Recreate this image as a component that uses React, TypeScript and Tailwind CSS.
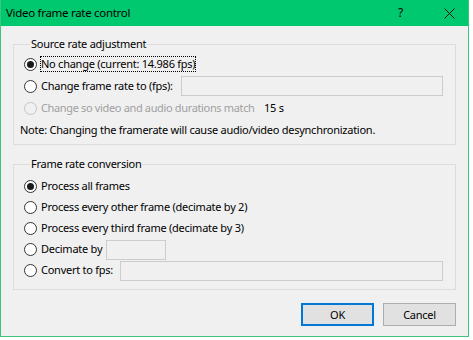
import React from 'react';

const font = { fontFamily: '"Noto Sans", "Liberation Sans", sans-serif' };

const Radio: React.FC<{ checked?: boolean; disabled?: boolean }> = ({ checked, disabled }) => (
  <span
    className={`flex h-[13px] w-[13px] shrink-0 items-center justify-center rounded-full border ${
      disabled ? 'border-[#c4c4c4] bg-[#f0f0f0]' : 'border-[#333333] bg-white'
    }`}
  >
    {checked && <span className="h-[7px] w-[7px] rounded-full bg-[#1a1a1a]" />}
  </span>
);

const Field: React.FC<{ className: string }> = ({ className }) => (
  <div className={`h-[20px] shrink-0 border border-[#cccccc] bg-[#f0f0f0] ${className}`} />
);

const App: React.FC = () => {
  return (
    <div
      className="h-[340px] w-[473px] whitespace-nowrap bg-white text-[11px] tracking-[-0.25px] text-black"
      style={font}
    >
      <div className="flex h-[337px] w-[469px] flex-col border border-t-0 border-[#3fc47f] bg-[#f0f0f0]">
        {/* title bar */}
        <div className="flex h-[26px] shrink-0 items-center bg-[#00c86e] pl-[5px]">
          <span className="flex-1 text-[11.5px] tracking-[-0.3px]">Video frame rate control</span>
          <span className="w-[46px] pl-[3px] text-center text-[12px]">?</span>
          <span className="flex w-[46px] items-center justify-center pl-[8px]">
            <svg width="11" height="11" viewBox="0 0 11 11" stroke="#111" strokeWidth="1">
              <path d="M0.5 0.5 L10.5 10.5 M10.5 0.5 L0.5 10.5" />
            </svg>
          </span>
        </div>

        <div className="flex flex-col px-[12px] pt-[10px]">
          <fieldset className="border border-[#dcdcdc] pb-[3px] pl-[10px] pr-[12px]">
            <legend className="ml-[6px] px-[1px] leading-[16px]">Source rate adjustment</legend>
            <div className="mt-[1px] flex h-[22px] items-center gap-[3px]">
              <Radio checked />
              <span className="border border-dotted border-black leading-[14px]">
                No change (current: 14.986 fps)
              </span>
            </div>
            <div className="flex h-[22px] items-center gap-[4px]">
              <Radio />
              <span>Change frame rate to (fps):</span>
              <Field className="ml-auto w-[262px]" />
            </div>
            <div className="flex h-[22px] items-center gap-[4px]">
              <Radio disabled />
              <span className="w-[219px] tracking-[-0.35px] text-[#a0a0a0]">
                Change so video and audio durations match
              </span>
              <span>15 s</span>
            </div>
            <div className="flex h-[22px] items-center">
              <span className="-ml-[4px]">Note: Changing the framerate will cause audio/video desynchronization.</span>
            </div>
          </fieldset>

          <fieldset className="mt-[11px] border border-[#dcdcdc] pb-[8px] pl-[10px] pr-[12px] pt-[4px]">
            <legend className="ml-[6px] px-[1px] leading-[16px]">Frame rate conversion</legend>
            <div className="flex h-[21px] items-center gap-[4px]">
              <Radio checked />
              <span>Process all frames</span>
            </div>
            <div className="flex h-[21px] items-center gap-[4px]">
              <Radio />
              <span>Process every other frame (decimate by 2)</span>
            </div>
            <div className="flex h-[21px] items-center gap-[4px]">
              <Radio />
              <span>Process every third frame (decimate by 3)</span>
            </div>
            <div className="flex h-[21px] items-center gap-[4px]">
              <Radio />
              <span className="w-[58px]">Decimate by</span>
              <Field className="ml-[3px] w-[60px]" />
            </div>
            <div className="flex h-[21px] items-center gap-[4px]">
              <Radio />
              <span>Convert to fps:</span>
              <Field className="ml-auto w-[323px]" />
            </div>
          </fieldset>

          <div className="mt-[13px] flex justify-end gap-[9px]">
            <button className="h-[23px] w-[73px] border-2 border-[#0078d7] bg-[#e1e1e1] leading-none">OK</button>
            <button className="h-[23px] w-[73px] border border-[#adadad] bg-[#e1e1e1] leading-none">Cancel</button>
          </div>
        </div>
      </div>
    </div>
  );
};

export default App;
